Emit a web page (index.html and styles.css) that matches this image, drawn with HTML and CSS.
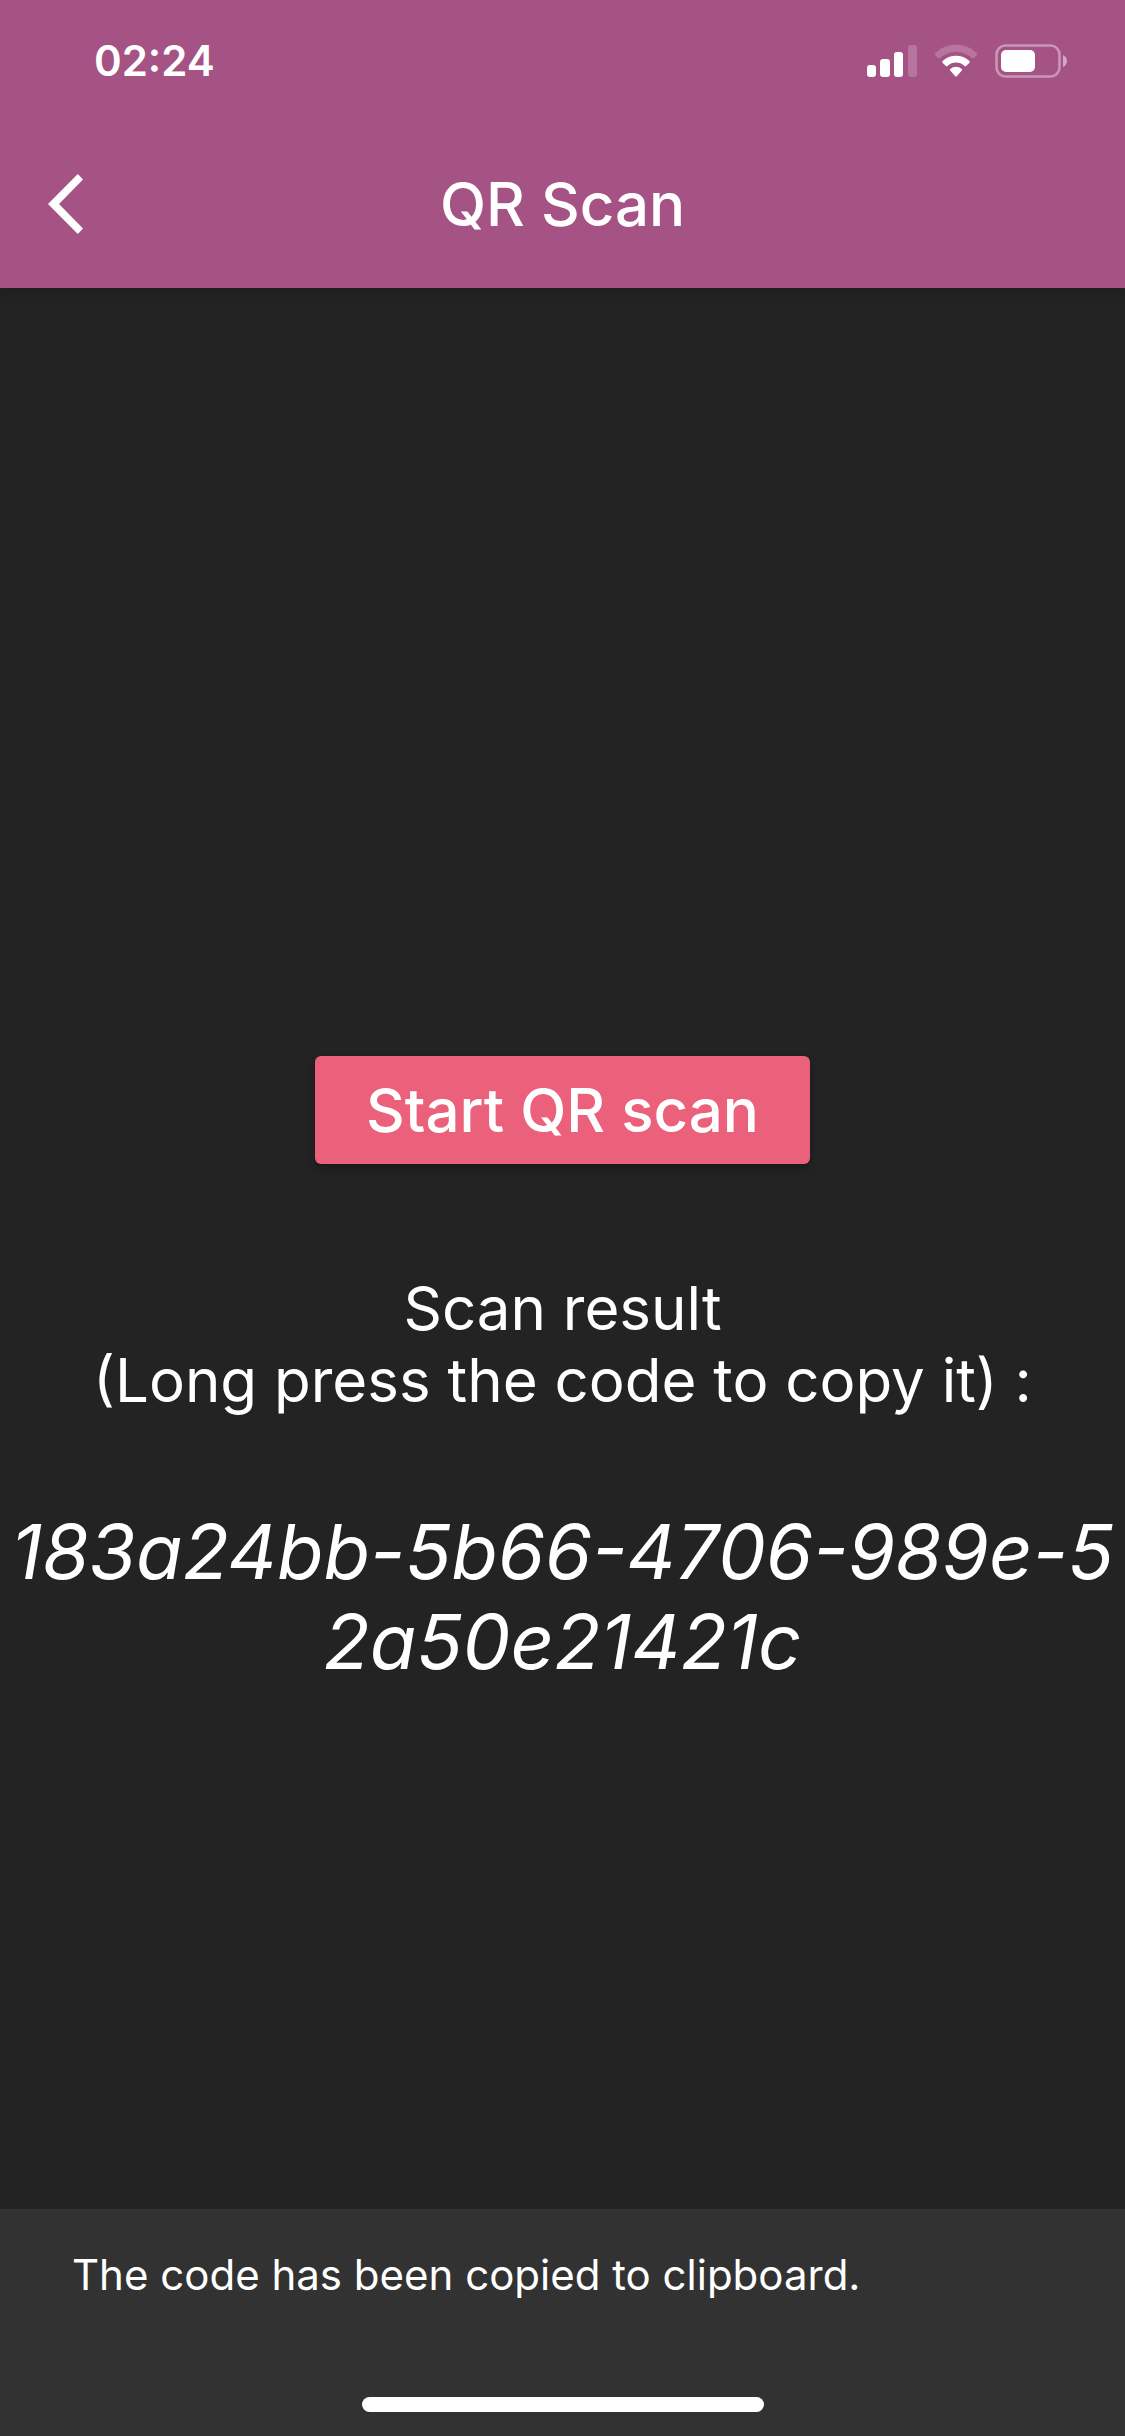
FILE: index.html
```html
<!DOCTYPE html>
<html lang="en">
<head>
<meta charset="utf-8">
<meta name="viewport" content="width=device-width, initial-scale=1">
<title>QR Scan</title>
<link rel="stylesheet" href="styles.css">
</head>
<body class="screen">
<header class="header">
  <div class="status">
    <time class="clock">02:24</time>
    <div class="indicators">
      <svg width="50" height="34" viewBox="0 0 50 34" fill="#fff" aria-label="Signal">
        <rect x="0" y="21" width="9" height="12" rx="3"/>
        <rect x="13" y="15" width="10" height="18" rx="3"/>
        <rect x="27" y="8" width="9" height="25" rx="3"/>
        <rect x="41" y="1" width="9" height="32" rx="3" opacity=".2"/>
      </svg>
      <svg width="44" height="34" viewBox="0 0 44 34" fill="#fff" aria-label="Wi-Fi">
        <path opacity=".2" d="M1.1 9.2a29.7 29.7 0 0 1 41.8 0q.8.9 0 1.8l-3.2 3.2q-.8.8-1.7 0a23.2 23.2 0 0 0-32 0q-.9.8-1.7 0L1.1 11q-.8-.9 0-1.8z"/>
        <path d="M8.6 17a19.5 19.5 0 0 1 26.8 0q.9.9 0 1.8l-3.2 3.1q-.8.8-1.7 0a12.5 12.5 0 0 0-17 0q-.9.8-1.7 0l-3.2-3.1q-.9-.9 0-1.8z"/>
        <path d="M16.3 24.9a9 9 0 0 1 11.4 0q.9.8.1 1.7l-5 5.6q-.8.8-1.6 0l-5-5.6q-.8-.9.1-1.7z"/>
      </svg>
      <svg width="72" height="34" viewBox="0 0 72 34" fill="#fff" aria-label="Battery">
        <rect x="1.5" y="1.5" width="63" height="31" rx="9" fill="none" stroke="#fff" stroke-width="2.6" opacity=".4"/>
        <rect x="6" y="6" width="34" height="22" rx="5"/>
        <path opacity=".5" d="M68 11q4 2 4 6t-4 6z"/>
      </svg>
    </div>
  </div>
  <div class="toolbar">
    <button class="back" type="button" aria-label="Back">
      <svg width="36" height="60" viewBox="0 0 36 60" fill="#fff"><path d="M35 5.6 29.8 0 0 30l29.8 30 5.2-5.6L11 30z"/></svg>
    </button>
    <h1 class="title">QR Scan</h1>
  </div>
</header>
<main class="content">
  <button class="scan" type="button">Start QR scan</button>
  <p class="hint">Scan result<br>(Long press the code to copy it) :</p>
  <p class="code">183a24bb-5b66-4706-989e-52a50e21421c</p>
</main>
<div class="snackbar" role="status">
  <p class="message">The code has been copied to clipboard.</p>
  <div class="home"></div>
</div>
</body>
</html>
```
FILE: styles.css
```css
* { box-sizing: border-box; }

.screen {
  margin: 0;
  min-height: 100vh;
  display: flex;
  flex-direction: column;
  background: #232323;
  color: #fff;
  font-family: Inter, "Liberation Sans", sans-serif;
  font-size: 60px;
  line-height: 72px;
}

.header {
  background: #a55285;
  box-shadow: 0 6px 12px rgba(0, 0, 0, .15);
}

.status {
  height: 120px;
  padding: 2px 58px 0 94px;
  display: flex;
  align-items: center;
  justify-content: space-between;
}

.clock {
  font-size: 42px;
  font-weight: 600;
}

.indicators {
  display: flex;
  gap: 17px;
}

.toolbar {
  height: 168px;
  display: grid;
  grid-template-columns: 132px 1fr 132px;
  align-items: center;
}

.back {
  height: 144px;
  padding: 0;
  border: 0;
  background: none;
  display: flex;
  align-items: center;
  justify-content: center;
}

.title {
  margin: 0;
  font-size: 60px;
  font-weight: 500;
  text-align: center;
}

.content {
  flex: 1;
  display: flex;
  flex-direction: column;
  align-items: center;
  justify-content: center;
  gap: 90px;
  text-align: center;
}

.scan {
  margin: 18px 0;
  padding: 18px 51px;
  border: 0;
  border-radius: 6px;
  background: #eb617b;
  box-shadow: 0 4px 8px rgba(0, 0, 0, .3);
  color: inherit;
  font: inherit;
  font-weight: 500;
}

.hint, .code, .message { margin: 0; }

.code {
  padding: 0 6px;
  font-size: 76px;
  font-style: italic;
  line-height: 90px;
  word-break: break-all;
}

.snackbar {
  position: fixed;
  inset: auto 0 0;
  padding: 42px 72px 24px;
  display: flex;
  flex-direction: column;
  gap: 98px;
  background: #323232;
}

.message {
  font-size: 42px;
  line-height: 48px;
}

.home {
  width: 402px;
  height: 15px;
  align-self: center;
  border-radius: 8px;
  background: #fff;
}
```
